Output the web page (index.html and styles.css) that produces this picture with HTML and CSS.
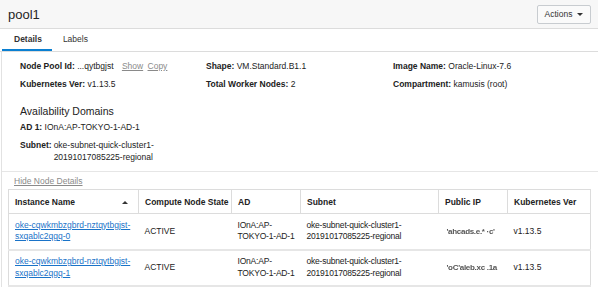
FILE: index.html
```html
<!DOCTYPE html>
<html lang="en">
<head>
    <meta charset="UTF-8">
    <title>pool1</title>
    <link rel="stylesheet" href="styles.css">
</head>
<body>
    <!-- --- HEADER --- -->
    <div class="page-header">
        <h1 class="title">pool1</h1>
        <button class="actions-btn">Actions <span class="caret"></span></button>
    </div>

    <!-- --- TABS --- -->
    <div class="tabs">
        <span class="tab active">Details</span>
        <span class="tab">Labels</span>
    </div>

    <!-- --- DETAILS PANEL --- -->
    <div class="panel">
        <div class="info-grid">
            <div><b>Node Pool Id:</b> ...qytbgjst <a class="muted-link show">Show</a> <a class="muted-link">Copy</a></div>
            <div><b>Shape:</b> VM.Standard.B1.1</div>
            <div><b>Image Name:</b> Oracle-Linux-7.6</div>
            <div><b>Kubernetes Ver:</b> v1.13.5</div>
            <div><b>Total Worker Nodes:</b> 2</div>
            <div><b>Compartment:</b> kamusis (root)</div>
        </div>

        <h2 class="section-title">Availability Domains</h2>
        <div class="ad-line"><b>AD 1:</b> IOnA:AP-TOKYO-1-AD-1</div>
        <div class="subnet-line">
            <b>Subnet:</b>
            <span>oke-subnet-quick-cluster1-<br>20191017085225-regional</span>
        </div>

        <div class="node-section">
            <a class="muted-link hide-link">Hide Node Details</a>
            <table class="node-table">
                <thead>
                    <tr>
                        <th class="col-name">Instance Name <span class="sort-arrow"></span></th>
                        <th class="col-state">Compute Node State</th>
                        <th class="col-ad">AD</th>
                        <th class="col-subnet">Subnet</th>
                        <th class="col-ip">Public IP</th>
                        <th class="col-ver">Kubernetes Ver</th>
                    </tr>
                </thead>
                <tbody>
                    <tr>
                        <td><a class="link">oke-cqwkmbzgbrd-nztqytbgjst-<br>sxqablc2qgq-0</a></td>
                        <td>ACTIVE</td>
                        <td class="nowrap">IOnA:AP-<br>TOKYO-1-AD-1</td>
                        <td class="nowrap">oke-subnet-quick-cluster1-<br>20191017085225-regional</td>
                        <td><span class="blurred">'ahcads.e.* ·c'</span></td>
                        <td>v1.13.5</td>
                    </tr>
                    <tr>
                        <td><a class="link">oke-cqwkmbzgbrd-nztqytbgjst-<br>sxqablc2qgq-1</a></td>
                        <td>ACTIVE</td>
                        <td class="nowrap">IOnA:AP-<br>TOKYO-1-AD-1</td>
                        <td class="nowrap">oke-subnet-quick-cluster1-<br>20191017085225-regional</td>
                        <td><span class="blurred">'oC'aleb.xc .1a</span></td>
                        <td>v1.13.5</td>
                    </tr>
                </tbody>
            </table>
        </div>
    </div>
</body>
</html>
```

FILE: styles.css
```css
/* --- RESET & GLOBAL --- */
* {
    margin: 0;
    padding: 0;
    box-sizing: border-box;
}

body {
    font-family: "Liberation Sans", Arial, sans-serif;
    font-size: 8.5px;
    color: #222;
    background: #fff;
    width: 598px;
    overflow: hidden;
}

b {
    font-weight: bold;
}

/* --- HEADER --- */
.page-header {
    height: 29px;
    background: #f7f7f7;
    border-bottom: 1px solid #dcdcdc;
    display: flex;
    align-items: center;
    justify-content: space-between;
    padding: 0 7px 0 8px;
}

.title {
    font-size: 13px;
    font-weight: normal;
    color: #252525;
}

.actions-btn {
    font-family: inherit;
    font-size: 8.5px;
    color: #333;
    background: #fafafa;
    border: 1px solid #c8ccd0;
    border-radius: 2px;
    height: 19px;
    width: 54px;
    display: flex;
    align-items: center;
    justify-content: center;
    gap: 5px;
}

.caret {
    width: 0;
    height: 0;
    border-left: 3px solid transparent;
    border-right: 3px solid transparent;
    border-top: 3px solid #333;
}

/* --- TABS --- */
.tabs {
    display: flex;
    height: 23px;
    border-bottom: 1px solid #dcdcdc;
    padding-left: 2px;
}

.tab {
    padding: 0 11px;
    line-height: 21px;
    color: #333;
}

.tab.active {
    font-weight: bold;
    border-bottom: 2px solid #0a7fd1;
    padding: 0 10px 0 12px;
}

/* --- PANEL --- */
.panel {
    margin-left: 1px;
    border-left: 1px solid #e2e2e2;
    padding-top: 8px;
}

.info-grid {
    display: grid;
    grid-template-columns: 186px 187px 1fr;
    row-gap: 6px;
    padding-left: 18px;
    line-height: 12px;
}

.muted-link {
    color: #8a8a8a;
    text-decoration: underline;
    margin-left: 2px;
}

.muted-link.show {
    margin-left: 6px;
}

.section-title {
    font-size: 10.5px;
    font-weight: normal;
    color: #222;
    padding-left: 18px;
    margin-top: 14px;
    line-height: 14px;
}

.ad-line {
    padding-left: 18px;
    margin-top: 3px;
    line-height: 12px;
}

.subnet-line {
    display: flex;
    gap: 2px;
    padding-left: 18px;
    margin-top: 6px;
    line-height: 12px;
}

/* --- NODE TABLE --- */
.node-section {
    margin-top: 8px;
    border-top: 1px solid #e6e6e6;
    padding: 3px 6px 0 6px;
}

.hide-link {
    display: inline-block;
    margin-left: 6px;
    line-height: 12px;
}

.node-table {
    margin-top: 2px;
    width: 583px;
    border-collapse: collapse;
    border: 1px solid #dcdcdc;
    table-layout: fixed;
}

.node-table th {
    text-align: left;
    font-weight: bold;
    height: 24px;
    padding: 0 4px 0 6px;
    white-space: nowrap;
    border-right: 1px solid #dcdcdc;
    border-bottom: 1px solid #dcdcdc;
}

.node-table td {
    padding: 0 6px;
    height: 36px;
    line-height: 11.5px;
    border-bottom: 2px solid #e6e6e6;
    vertical-align: middle;
}

.node-table td.nowrap {
    white-space: nowrap;
    letter-spacing: -0.2px;
}

.col-name { width: 130px; position: relative; }
.col-state { width: 93px; }
.col-ad { width: 69px; }
.col-subnet { width: 138px; }
.col-ip { width: 69px; }

.sort-arrow {
    position: absolute;
    right: 10px;
    top: 11px;
    width: 0;
    height: 0;
    border-left: 3px solid transparent;
    border-right: 3px solid transparent;
    border-bottom: 3px solid #333;
}

.link {
    color: #1a73c8;
    text-decoration: underline;
}

.blurred {
    display: inline-block;
    margin-left: 2px;
    font-size: 8px;
    font-weight: bold;
    color: #555;
    filter: blur(0.5px);
    letter-spacing: -0.3px;
}
```
